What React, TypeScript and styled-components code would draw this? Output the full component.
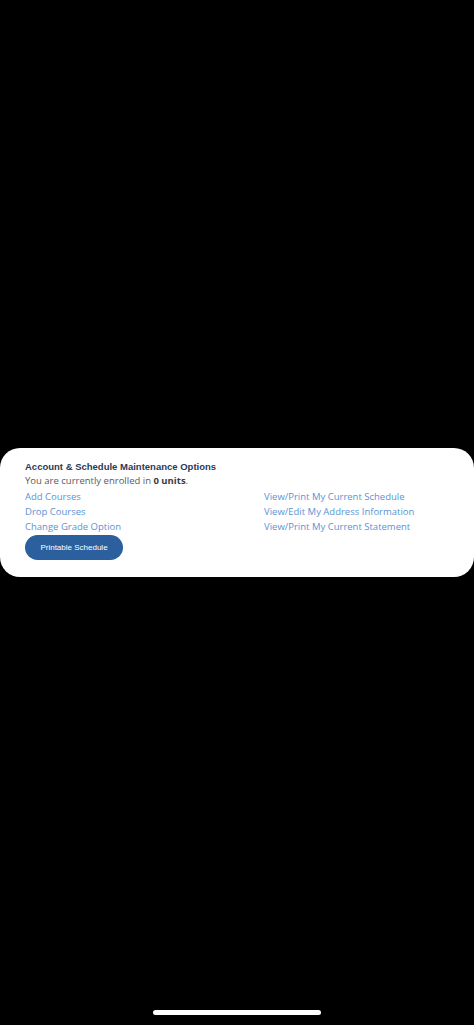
import React, { FC } from 'react';
import styled, { createGlobalStyle } from 'styled-components';

const GlobalStyle = createGlobalStyle`
	html, body {
		margin: 0;
		padding: 0;
		background: #000;
	}
`;

const Screen = styled.div`
	width: 474px;
	height: 1025px;
	box-sizing: border-box;
	padding-top: 448px;
	background: #000;
	display: flex;
	flex-direction: column;
	align-items: center;
`;

const Card = styled.section`
	width: 474px;
	box-sizing: border-box;
	background: #fff;
	border-radius: 20px;
	padding: 12px 25px 17px;
`;

const Title = styled.h1`
	margin: 0;
	font-family: 'Liberation Sans', Arial, sans-serif;
	font-weight: bold;
	font-size: 9.5px;
	line-height: 13px;
	color: #2b3a5a;
`;

const Text = styled.p`
	margin: 0;
	font-family: 'Open Sans', sans-serif;
	font-size: 9.5px;
	line-height: 16px;
	color: #5a5a5a;

	b {
		color: #3c3c3c;
	}
`;

const LinksGrid = styled.div`
	display: grid;
	grid-template-columns: 239px 1fr;
	grid-auto-rows: 15px;
`;

const Link = styled.a`
	font-family: 'Open Sans', sans-serif;
	font-size: 9.5px;
	line-height: 15px;
	color: #5b93d3;
	text-decoration: none;
`;

const PrintButton = styled.button`
	display: block;
	margin-top: 1px;
	width: 98px;
	height: 25px;
	border: none;
	border-radius: 13px;
	background: #2b5f9e;
	color: #fff;
	font-family: 'Liberation Sans', Arial, sans-serif;
	font-size: 8px;
	padding: 0;
`;

const Spacer = styled.div`
	flex: 1;
`;

const HomeIndicator = styled.div`
	width: 168px;
	height: 5px;
	border-radius: 3px;
	background: #fff;
	margin-bottom: 10px;
`;

const links: [string, string][] = [
	['Add Courses', 'View/Print My Current Schedule'],
	['Drop Courses', 'View/Edit My Address Information'],
	['Change Grade Option', 'View/Print My Current Statement'],
];

const App: FC = () => (
	<>
		<GlobalStyle />
		<Screen>
			<Card>
				<Title>Account &amp; Schedule Maintenance Options</Title>
				<Text>
					You are currently enrolled in <b>0 units</b>.
				</Text>
				<LinksGrid>
					{links.map(([left, right]) => (
						<React.Fragment key={left}>
							<Link href="#">{left}</Link>
							<Link href="#">{right}</Link>
						</React.Fragment>
					))}
				</LinksGrid>
				<PrintButton>Printable Schedule</PrintButton>
			</Card>
			<Spacer />
			<HomeIndicator />
		</Screen>
	</>
);

export default App;
